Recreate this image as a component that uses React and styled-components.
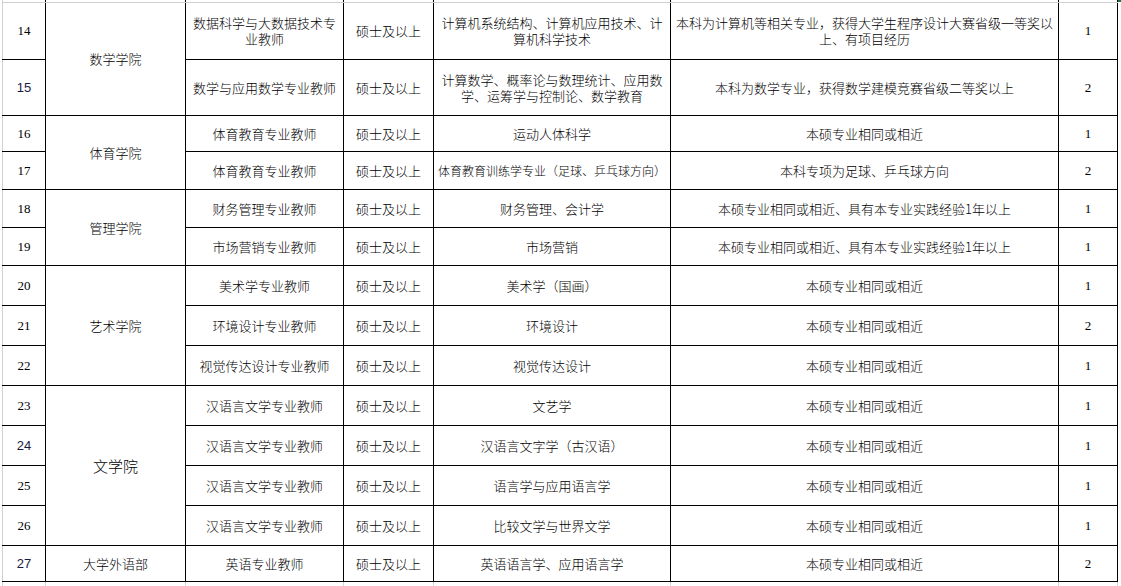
import React from "react";
import styled, { createGlobalStyle } from "styled-components";

const GlobalStyle = createGlobalStyle`
  html, body { margin: 0; padding: 0; background: #ffffff; }
  body { font-family: "Noto Sans CJK SC", "Liberation Sans", sans-serif; color: #000; }
`;

const Sheet = styled.div`
  position: relative;
  width: 1121px;
  height: 586px;
  overflow: hidden;
  background: #fff;
`;

const SelectionMark = styled.span`
  position: absolute;
  top: 0;
  left: 1118px;
  width: 3px;
  height: 2px;
  background: #217346;
`;

const Grid = styled.table`
  border-collapse: collapse;
  table-layout: fixed;
  width: 1116px;
  margin-left: 2px;
`;

const Cell = styled.td`
  border: 1px solid #000;
  padding: 0;
  text-align: center;
  vertical-align: middle;
  font-family: "Noto Sans CJK SC", "Liberation Sans", sans-serif;
  font-weight: 300;
  font-size: ${(p) => p.$size || 13}px;
  line-height: 16px;
  color: #000;
  height: ${(p) => p.$h}px;
  white-space: nowrap;
`;

const NumCell = styled(Cell)`
  font-family: ${(p) => (p.$sans ? '"Liberation Sans", sans-serif' : '"Liberation Serif", serif')};
  font-weight: 400;
  font-size: 13px;
  color: ${(p) => (p.$sans ? "#1a1a40" : "#000")};
`;

const IndexCell = styled(NumCell)`
  border-left-color: #d0d0d0;
`;

const EdgeCell = styled.td`
  padding: 0;
  height: 2px;
  font-size: 0;
  line-height: 0;
  border-top: none;
  border-bottom: 1px solid #d0d0d0;
  border-left: 1px solid ${(p) => (p.$first ? "#d0d0d0" : "#000")};
  border-right: 1px solid #000;
`;

const TailCell = styled.td`
  padding: 0;
  height: 10px;
  font-size: 0;
  border: 1px solid #d4d4d4;
  border-bottom: none;
`;

const widths = [43, 140, 158, 90, 237, 388, 59];

const rows = [
  { n: "14", h: 56, dept: "数学学院", span: 2, pos: ["数据科学与大数据技术专", "业教师"], major: ["计算机系统结构、计算机应用技术、计", "算机科学技术"], req: ["本科为计算机等相关专业，获得大学生程序设计大赛省级一等奖以", "上、有项目经历"], c: "1" },
  { n: "15", sans: true, h: 55, pos: ["数学与应用数学专业教师"], major: ["计算数学、概率论与数理统计、应用数", "学、运筹学与控制论、数学教育"], req: ["本科为数学专业，获得数学建模竞赛省级二等奖以上"], c: "2" },
  { n: "16", h: 35, dept: "体育学院", span: 2, pos: ["体育教育专业教师"], major: ["运动人体科学"], req: ["本硕专业相同或相近"], c: "1" },
  { n: "17", h: 37, pos: ["体育教育专业教师"], major: ["体育教育训练学专业（足球、乒乓球方向）"], majorSize: 12, req: ["本科专项为足球、乒乓球方向"], c: "2" },
  { n: "18", h: 37, dept: "管理学院", span: 2, pos: ["财务管理专业教师"], major: ["财务管理、会计学"], req: ["本硕专业相同或相近、具有本专业实践经验1年以上"], c: "1" },
  { n: "19", h: 37, pos: ["市场营销专业教师"], major: ["市场营销"], req: ["本硕专业相同或相近、具有本专业实践经验1年以上"], c: "1" },
  { n: "20", h: 39, dept: "艺术学院", span: 3, pos: ["美术学专业教师"], major: ["美术学（国画）"], req: ["本硕专业相同或相近"], c: "1" },
  { n: "21", h: 39, pos: ["环境设计专业教师"], major: ["环境设计"], req: ["本硕专业相同或相近"], c: "2" },
  { n: "22", h: 39, pos: ["视觉传达设计专业教师"], major: ["视觉传达设计"], req: ["本硕专业相同或相近"], c: "1" },
  { n: "23", h: 39, dept: "文学院", deptSize: 15, span: 4, pos: ["汉语言文学专业教师"], major: ["文艺学"], req: ["本硕专业相同或相近"], c: "1" },
  { n: "24", sans: true, h: 39, pos: ["汉语言文学专业教师"], major: ["汉语言文字学（古汉语）"], req: ["本硕专业相同或相近"], c: "1" },
  { n: "25", h: 39, pos: ["汉语言文学专业教师"], major: ["语言学与应用语言学"], req: ["本硕专业相同或相近"], c: "1" },
  { n: "26", h: 39, pos: ["汉语言文学专业教师"], major: ["比较文学与世界文学"], req: ["本硕专业相同或相近"], c: "1" },
  { n: "27", sans: true, h: 35, dept: "大学外语部", span: 1, pos: ["英语专业教师"], major: ["英语语言学、应用语言学"], req: ["本硕专业相同或相近"], c: "2" },
];

const Lines = ({ lines }) =>
  lines.map((l, i) => (
    <React.Fragment key={i}>
      {i > 0 && <br />}
      {l}
    </React.Fragment>
  ));

export default function App() {
  return (
    <>
      <GlobalStyle />
      <Sheet>
        <Grid>
          <colgroup>
            {widths.map((w, i) => (
              <col key={i} style={{ width: w }} />
            ))}
          </colgroup>
          <tbody>
            <tr>
              {widths.map((_, i) => (
                <EdgeCell key={i} $first={i === 0} />
              ))}
            </tr>
            {rows.map((r) => (
              <tr key={r.n}>
                <IndexCell $h={r.h} $sans={r.sans}>{r.n}</IndexCell>
                {r.dept && (
                  <Cell rowSpan={r.span} $size={r.deptSize}>
                    {r.dept}
                  </Cell>
                )}
                <Cell $h={r.h}>
                  <Lines lines={r.pos} />
                </Cell>
                <Cell $h={r.h}>硕士及以上</Cell>
                <Cell $h={r.h} $size={r.majorSize}>
                  <Lines lines={r.major} />
                </Cell>
                <Cell $h={r.h}>
                  <Lines lines={r.req} />
                </Cell>
                <NumCell $h={r.h}>{r.c}</NumCell>
              </tr>
            ))}
            <tr>
              {widths.map((_, i) => (
                <TailCell key={i} />
              ))}
            </tr>
          </tbody>
        </Grid>
        <SelectionMark />
      </Sheet>
    </>
  );
}
